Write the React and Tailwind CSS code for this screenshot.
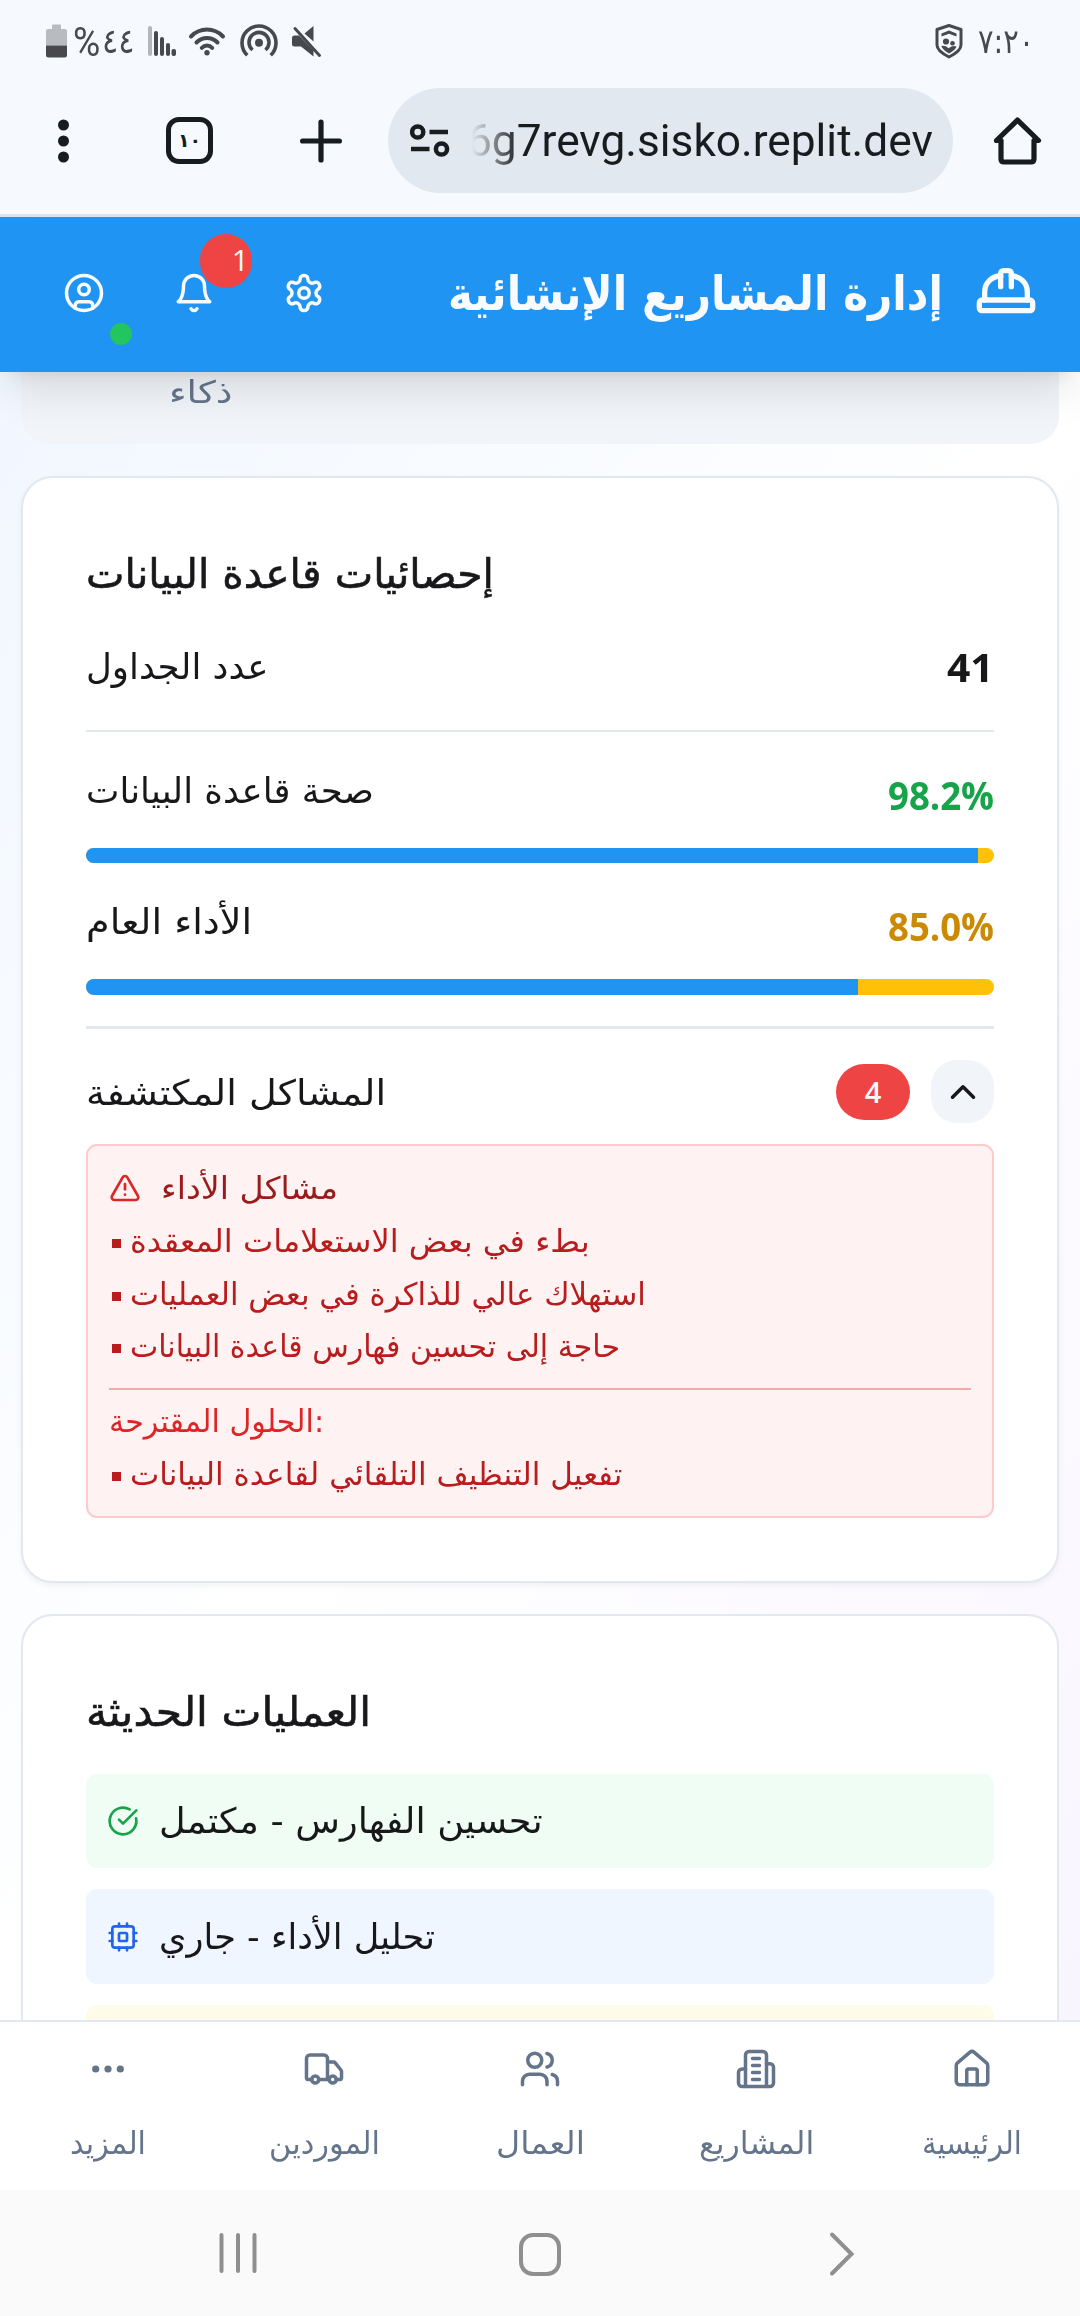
import { useLayoutEffect, useRef, useState } from "react";
import {
  ChevronUp,
  CircleCheckBig,
  CircleUser,
  House,
  Truck,
  TriangleAlert,
  Users,
} from "lucide-react";

/* Single line of text stretched or squeezed to an exact width. */
function Fit({ w, className = "", children }) {
  const ref = useRef(null);
  const [scale, setScale] = useState(1);
  useLayoutEffect(() => {
    if (ref.current.offsetWidth) setScale(w / ref.current.offsetWidth);
  }, [w]);
  return (
    <div className="shrink-0" style={{ width: w }}>
      <span
        ref={ref}
        className={`inline-block origin-left whitespace-nowrap align-top ${className}`}
        style={{ transform: `scaleX(${scale})` }}
      >
        {children}
      </span>
    </div>
  );
}

function StatusBar() {
  return (
    <div className="flex h-[82px] items-start justify-between text-[#47494c]">
      <div className="flex items-start pl-[46px]">
        <svg className="mt-[24px]" width="22" height="34" viewBox="0 0 22 34">
          <path d="M6 1.5Q6 .5 7 .5h7q1 0 1 1V5h4q2 0 2 2v14.500H0V7q0-2 2-2h4z" fill="#b8bbbf" />
          <path d="M0 21.500h21V31q0 2.500-2.500 2.500h-16Q0 33.500 0 31z" fill="#47494c" />
        </svg>
        <div className="ml-[5px] mt-[21px]">
          <Fit w={27} className="font-['Roboto'] text-[40px] leading-[44px]">%</Fit>
        </div>
        <div className="ml-[2px] mt-[19px]">
          <Fit w={33} className="text-[34px] leading-[44px]">٤٤</Fit>
        </div>
        <svg className="ml-[13px] mt-[25px]" width="30" height="32" viewBox="0 0 30 32">
          <rect x="0" y="1" width="4" height="30" rx="2" fill="#b3b6ba" />
          <rect x="6" y="6" width="4" height="25" rx="2" fill="currentColor" />
          <rect x="12" y="12" width="4" height="19" rx="2" fill="currentColor" />
          <rect x="18" y="18" width="4" height="13" rx="2" fill="currentColor" />
          <rect x="23.500" y="24" width="4.500" height="7" rx="2" fill="currentColor" />
        </svg>
        <svg className="ml-[10px] mt-[26px]" width="38" height="32" viewBox="0 0 38 32" fill="none" stroke="currentColor" strokeWidth="4" strokeLinecap="round">
          <path d="M3 10.500C12 1.300 26 1.300 35 10.500M8.500 16.500C14.500 10.500 23.500 10.500 29.500 16.500M13.800 21.800c3-3 7.400-3 10.400 0" />
          <circle cx="19" cy="26.800" r="2.700" fill="currentColor" stroke="none" />
        </svg>
        <svg className="ml-[14px] mt-[22px]" width="38" height="36" viewBox="0 0 38 36" fill="none" stroke="currentColor" strokeWidth="3.600">
          <path d="M7.300 33.300A17 17 0 1 1 30.700 33.300" />
          <path d="M12.500 28A10 10 0 1 1 25.500 28" />
          <circle cx="19" cy="20.700" r="4" fill="currentColor" stroke="none" />
        </svg>
        <svg className="ml-[14px] mt-[24px]" width="32" height="34" viewBox="0 0 32 34">
          <path d="M0 14q0-2.500 2.500-2.500H7L21.500 26.500V32.500L9 22.500H2.500Q0 22.500 0 20zM12.500 9.500L21.500 2v15.500z" fill="currentColor" />
          <path d="M3 4.500L27.500 31.500" stroke="currentColor" strokeWidth="3" strokeLinecap="round" />
        </svg>
      </div>
      <div className="flex items-start pr-[46px]">
        <svg className="mt-[23px]" width="28" height="36" viewBox="0 0 28 36" fill="none" stroke="currentColor">
          <path d="M14 2.500L26 6.500V22q0 6-12 12Q2 28 2 22V6.500z" strokeWidth="3" strokeLinejoin="round" />
          <path d="M6.500 13.500V10.500L14 7.500L21.500 10.500V13.500L14 10.800z" fill="currentColor" stroke="none" />
          <circle cx="11" cy="18.500" r="3.100" fill="currentColor" stroke="none" />
          <circle cx="17.500" cy="20.300" r="2.300" fill="currentColor" stroke="none" />
          <path d="M6.200 23q4-1 7.300 2.200L16.500 23.500q2-1 5 0Q20.500 27 14 30.500Q8 27 6.200 23z" fill="currentColor" stroke="none" />
        </svg>
        <div className="ml-[15px] mt-[19px]">
          <Fit w={56} className="text-[34px] leading-[44px]">
            <span dir="ltr" className="[unicode-bidi:bidi-override]">۷:۲۰</span>
          </Fit>
        </div>
      </div>
    </div>
  );
}

function BrowserBar() {
  return (
    <div className="flex h-[135px] items-start border-b-[3px] border-[#dbe4ec] pt-[6px] text-[#171c1f]">
      <svg className="ml-[58px] mt-[31px]" width="12" height="44" viewBox="0 0 12 44" fill="currentColor">
        <circle cx="5.500" cy="6" r="5.500" />
        <circle cx="5.500" cy="22" r="5.500" />
        <circle cx="5.500" cy="38" r="5.500" />
      </svg>
      <div className="ml-[96px] mt-[29px] flex h-[47px] w-[47px] items-center justify-center rounded-[13px] border-[5px] border-[#171c1f]">
        <span dir="ltr" className="text-[19px] font-bold leading-none [unicode-bidi:bidi-override]">۱۰</span>
      </div>
      <svg className="ml-[87px] mt-[31px]" width="42" height="44" viewBox="0 0 42 44" stroke="currentColor" strokeWidth="5.200" strokeLinecap="round">
        <path d="M21 3v38M2.600 22h36.800" />
      </svg>
      <div className="ml-[46px] flex h-[105px] w-[565px] items-start rounded-full bg-[#e2e8f0]">
        <svg className="ml-[22px] mt-[35px]" width="40" height="36" viewBox="0 0 40 36" fill="none" stroke="currentColor" strokeWidth="4.500">
          <circle cx="7.700" cy="9" r="5.600" />
          <path d="M19.500 9H38M1 26h18.500" />
          <circle cx="31.500" cy="26" r="5.600" />
        </svg>
        <div className="ml-[17px] mt-[21px] [mask-image:linear-gradient(to_right,transparent_5px,black_52px)]">
          <Fit w={466} className="font-['Roboto'] text-[45px] leading-[64px]">6g7revg.sisko.replit.dev</Fit>
        </div>
      </div>
      <svg className="ml-[40px] mt-[28px]" width="50" height="50" viewBox="0 0 50 50" fill="none" stroke="currentColor" strokeWidth="5.200" strokeLinejoin="round" strokeLinecap="round">
        <path d="M3.500 24.500L24.500 4L45.500 24.500H41V43q0 3-3 3H11q-3 0-3-3V24.500z" />
      </svg>
    </div>
  );
}

const lineIcon = { fill: "none", stroke: "currentColor", strokeWidth: 2, strokeLinecap: "round", strokeLinejoin: "round" };

function AppHeader() {
  return (
    <header className="relative z-10 flex h-[155px] items-center bg-[#2094f3] pl-[36px] pr-[42px] text-[#f8fafc] shadow-[0_27px_40px_-8px_rgba(0,0,0,0.1),0_11px_16px_-11px_rgba(0,0,0,0.1)]">
      <div className="flex gap-[15px] pb-[4px]">
        <div className="relative flex h-[95px] w-[95px] items-center justify-center">
          <CircleUser size={42} strokeWidth={2} />
          <div className="absolute -bottom-[5px] -right-px h-[22px] w-[22px] rounded-full bg-[#22c55e]" />
        </div>
        <div className="relative flex h-[95px] w-[95px] items-center justify-center">
          <svg width="42" height="42" viewBox="0 0 24 24" {...lineIcon}>
            <path d="M6 8a6 6 0 0 1 12 0c0 7 3 9 3 9H3s3-2 3-9" />
            <path d="M10.300 21a1.940 1.940 0 0 0 3.400 0" />
          </svg>
          <div className="absolute -right-[11px] -top-[11px] flex h-[54px] w-[52px] justify-end rounded-[27px] bg-[#ef4444] pr-[3px] font-['Open_Sans'] text-[30px] font-medium leading-[52px]">
            1
          </div>
        </div>
        <div className="flex h-[95px] w-[95px] items-center justify-center">
          <svg width="42" height="42" viewBox="0 0 24 24" {...lineIcon}>
            <path d="M12.220 2h-.44a2 2 0 0 0-2 2v.18a2 2 0 0 1-1 1.730l-.43.25a2 2 0 0 1-2 0l-.15-.08a2 2 0 0 0-2.730.73l-.22.38a2 2 0 0 0 .73 2.730l.15.1a2 2 0 0 1 1 1.720v.51a2 2 0 0 1-1 1.740l-.15.09a2 2 0 0 0-.73 2.730l.22.38a2 2 0 0 0 2.730.73l.15-.08a2 2 0 0 1 2 0l.43.25a2 2 0 0 1 1 1.730V20a2 2 0 0 0 2 2h.44a2 2 0 0 0 2-2v-.18a2 2 0 0 1 1-1.730l.43-.25a2 2 0 0 1 2 0l.15.08a2 2 0 0 0 2.730-.73l.22-.39a2 2 0 0 0-.73-2.730l-.15-.08a2 2 0 0 1-1-1.740v-.5a2 2 0 0 1 1-1.740l.15-.09a2 2 0 0 0 .73-2.730l-.22-.38a2 2 0 0 0-2.730-.73l-.15.08a2 2 0 0 1-2 0l-.43-.25a2 2 0 0 1-1-1.730V4a2 2 0 0 0-2-2z" />
            <circle cx="12" cy="12" r="3" />
          </svg>
        </div>
      </div>
      <h1 className="ml-auto pb-[2px]">
        <Fit w={495} className="text-[47px] font-bold leading-[64px]">إدارة المشاريع الإنشائية</Fit>
      </h1>
      <svg className="mb-[5px] ml-[31px]" width="64" height="64" viewBox="0 0 24 24" {...lineIcon}>
        <path d="M2 18a1 1 0 0 0 1 1h18a1 1 0 0 0 1-1v-2a1 1 0 0 0-1-1H3a1 1 0 0 0-1 1v2z" />
        <path d="M10 10V5a1 1 0 0 1 1-1h2a1 1 0 0 1 1 1v5" />
        <path d="M4 15v-3a6 6 0 0 1 6-6" />
        <path d="M14 6a6 6 0 0 1 6 6v3" />
      </svg>
    </header>
  );
}

function Metric({ label, labelWidth, value, color, percent, barClass }) {
  return (
    <div className="mt-[33px]">
      <div className="flex h-[56px] items-start justify-between">
        <Fit w={labelWidth} className="text-[35px] leading-[52px]">{label}</Fit>
        <div className={`mt-[4px] ${color}`}>
          <Fit w={106} className="font-['Open_Sans'] text-[40px] font-bold leading-[52px]">{value}</Fit>
        </div>
      </div>
      <div className={`mt-[27px] overflow-hidden rounded-full bg-[#ffc107] ${barClass}`}>
        <div className="h-full bg-[#2094f3]" style={{ width: `${percent}%` }} />
      </div>
    </div>
  );
}

function Bullet({ w, children }) {
  return (
    <li className="flex h-[52.5px] items-center text-[#b91c1c]">
      <span className="ml-[3px] mt-[5px] h-[9px] w-[9px] bg-[#b91c1c]" />
      <div className="ml-[9px]">
        <Fit w={w} className="text-[31px] leading-[52px]">{children}</Fit>
      </div>
    </li>
  );
}

function DatabaseCard() {
  return (
    <section className="mt-[32px] h-[1107px] shrink-0 rounded-[32px] border-2 border-[#e2e8f0] bg-white px-[63px] pt-[70px] shadow-[0_3px_6px_rgba(0,0,0,0.05)]">
      <h2>
        <Fit w={408} className="text-[41px] leading-[52px] [-webkit-text-stroke:0.6px_currentColor]">إحصائيات قاعدة البيانات</Fit>
      </h2>
      <div className="mt-[41px] flex h-[52px] items-start justify-between">
        <Fit w={182} className="text-[35px] leading-[52px]">عدد الجداول</Fit>
        <Fit w={47} className="font-['Open_Sans'] text-[40px] font-bold leading-[52px]">41</Fit>
      </div>
      <div className="mt-[37px] h-[2px] bg-[#e2e8f0]" />
      <Metric label="صحة قاعدة البيانات" labelWidth={288} value="98.2%" color="text-[#16a34a]" percent={98.2} barClass="h-[15px]" />
      <Metric label="الأداء العام" labelWidth={166} value="85.0%" color="text-[#ca8a04]" percent={85} barClass="h-[16px]" />
      <div className="mt-[31px] h-[3px] bg-[#e2e8f0]" />
      <div className="mt-[31px] flex h-[63px] items-center">
        <div className="pt-[2px]">
          <Fit w={300} className="text-[35px] leading-[54px]">المشاكل المكتشفة</Fit>
        </div>
        <div className="ml-auto flex h-[56px] w-[74px] items-center justify-center rounded-full bg-[#ef4444] font-['Open_Sans'] text-[29px] font-semibold text-[#f8fafc]">
          4
        </div>
        <div className="ml-[21px] flex h-[63px] w-[63px] items-center justify-center rounded-[26px] bg-[#f1f5f9]">
          <ChevronUp size={42} strokeWidth={2} />
        </div>
      </div>
      <div className="mt-[21px] h-[374px] rounded-[11px] border-2 border-[#fecaca] bg-[#fef2f2] px-[21px] pt-[21px]">
        <div className="flex h-[42px] items-center text-[#991b1b]">
          <TriangleAlert size={32} strokeWidth={2} className="text-[#dc2626]" />
          <div className="ml-[20px]">
            <Fit w={177} className="text-[31px] leading-[42px]">مشاكل الأداء</Fit>
          </div>
        </div>
        <ul className="mt-[6px]">
          <Bullet w={460}>بطء في بعض الاستعلامات المعقدة</Bullet>
          <Bullet w={516}>استهلاك عالي للذاكرة في بعض العمليات</Bullet>
          <Bullet w={490}>حاجة إلى تحسين فهارس قاعدة البيانات</Bullet>
        </ul>
        <div className="mt-[15.5px] h-[2px] bg-[#f4a8a8]" />
        <div className="mt-[5px] text-[#dc2626]">
          <Fit w={215} className="text-[31px] leading-[52px]">الحلول المقترحة:</Fit>
        </div>
        <ul className="mt-px">
          <Bullet w={492}>تفعيل التنظيف التلقائي لقاعدة البيانات</Bullet>
        </ul>
      </div>
    </section>
  );
}

function CpuIcon() {
  return (
    <svg className="text-[#2563eb]" width="32" height="32" viewBox="0 0 24 24" {...lineIcon}>
      <rect x="4" y="4" width="16" height="16" rx="2" />
      <rect x="9" y="9" width="6" height="6" rx="1" />
      <path d="M15 2v2M15 20v2M2 15h2M2 9h2M20 15h2M20 9h2M9 2v2M9 20v2" />
    </svg>
  );
}

function OperationsCard() {
  return (
    <section className="mt-[31px] h-[600px] shrink-0 rounded-[32px] border-2 border-[#e2e8f0] bg-white px-[63px] pt-[70px]">
      <h2>
        <Fit w={285} className="text-[41px] leading-[52px] [-webkit-text-stroke:0.6px_currentColor]">العمليات الحديثة</Fit>
      </h2>
      <div className="mt-[36px] flex flex-col gap-[21px]">
        <div className="flex h-[94px] items-center gap-[20px] rounded-[11px] bg-[#f0fdf4] pl-[21px]">
          <CircleCheckBig size={32} className="text-[#16a34a]" />
          <Fit w={384} className="text-[35px] leading-[52px]">تحسين الفهارس - مكتمل</Fit>
        </div>
        <div className="flex h-[95px] items-center gap-[20px] rounded-[11px] bg-[#eff6ff] pl-[21px]">
          <CpuIcon />
          <Fit w={276} className="text-[35px] leading-[52px]">تحليل الأداء - جاري</Fit>
        </div>
        <div className="h-[95px] rounded-[11px] bg-[#fefce8]" />
      </div>
    </section>
  );
}

function Dots() {
  return (
    <svg width="42" height="42" viewBox="0 0 42 42" fill="currentColor">
      <circle cx="8.700" cy="21" r="3.600" />
      <circle cx="21" cy="21" r="3.600" />
      <circle cx="33.300" cy="21" r="3.600" />
    </svg>
  );
}

function Building() {
  return (
    <svg width="42" height="42" viewBox="0 0 24 24" {...lineIcon}>
      <path d="M6 22V4a2 2 0 0 1 2-2h8a2 2 0 0 1 2 2v18Z" />
      <path d="M6 12H4a2 2 0 0 0-2 2v6a2 2 0 0 0 2 2h2" />
      <path d="M18 9h2a2 2 0 0 1 2 2v9a2 2 0 0 1-2 2h-2" />
      <path d="M10 6h4M10 10h4M10 14h4M10 18h4" />
    </svg>
  );
}

const tabs = [
  { Icon: Dots, label: "المزيد", w: 76 },
  { Icon: Truck, label: "الموردين", w: 111 },
  { Icon: Users, label: "العمال", w: 89 },
  { Icon: Building, label: "المشاريع", w: 115 },
  { Icon: House, label: "الرئيسية", w: 100 },
];

function BottomNav() {
  return (
    <nav className="grid h-[170px] grid-cols-5 border-t-2 border-[#e2e8f0] bg-white pt-[26px] text-[#64748b]">
      {tabs.map(({ Icon, label, w }) => (
        <div key={label} className="flex flex-col items-center gap-[27px]">
          <Icon size={42} />
          <Fit w={w} className="text-[31px] leading-[52px]">{label}</Fit>
        </div>
      ))}
    </nav>
  );
}

function SystemNav() {
  return (
    <div className="flex h-[126px] items-center bg-[#fafafa] pl-[217px] text-[#8f8f8f]">
      <svg width="42" height="44" viewBox="0 0 42 44" stroke="currentColor" strokeWidth="4" strokeLinecap="round">
        <path d="M4.500 4v36M21 4v36M37.500 4v36" />
      </svg>
      <div className="ml-[260px] mt-[2px] h-[43px] w-[42px] rounded-[14px] border-4 border-[#8f8f8f]" />
      <svg className="ml-[268px] mt-[2px]" width="26" height="46" viewBox="0 0 26 46" fill="none" stroke="currentColor" strokeWidth="4" strokeLinecap="round">
        <path d="M3 3.500L22.500 23L3 42.500" />
      </svg>
    </div>
  );
}

export default function App() {
  return (
    <div className="flex h-[2316px] w-[1080px] flex-col overflow-hidden bg-[#f6faff] font-['DejaVu_Sans',sans-serif] text-[#18181b]">
      <StatusBar />
      <BrowserBar />
      <AppHeader />
      <main className="flex h-[1648px] flex-col overflow-hidden bg-linear-to-br from-[#f1f7ff] via-white to-[#f9f5ff] px-[21px]">
        <section className="h-[72px] shrink-0 rounded-b-[28px] bg-[#f1f5f9] pl-[148px] text-[#64748b]">
          <Fit w={64} className="text-[31px] leading-[41px]">ذكاء</Fit>
        </section>
        <DatabaseCard />
        <OperationsCard />
      </main>
      <BottomNav />
      <SystemNav />
    </div>
  );
}
